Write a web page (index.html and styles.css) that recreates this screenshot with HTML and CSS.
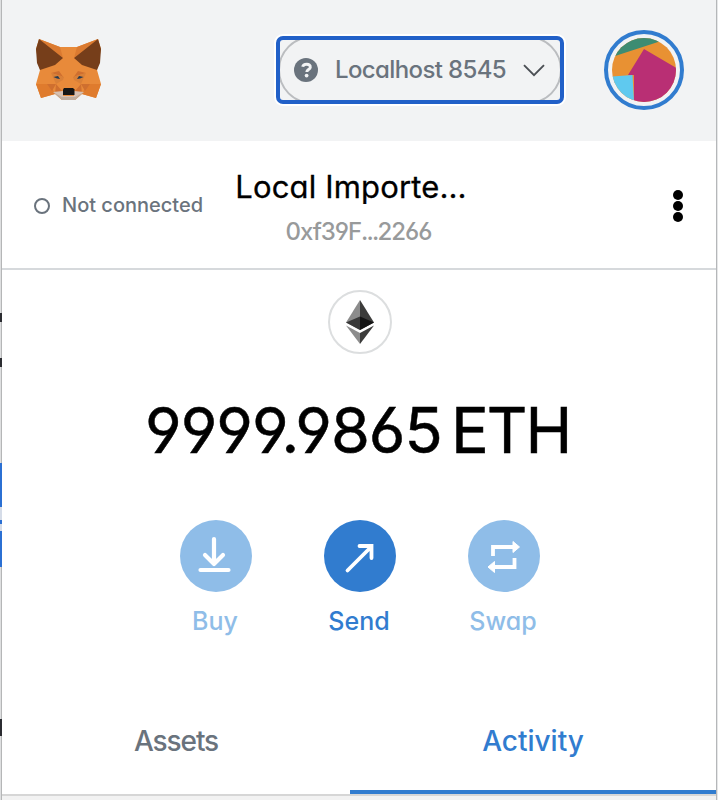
FILE: index.html
```
<!DOCTYPE html>
<html lang="en">
<head>
<meta charset="utf-8">
<title>Wallet</title>
<link rel="stylesheet" href="styles.css">
</head>
<body>
<div class="backdrop"><i class="ink one"></i><i class="ink two"></i><i class="block"></i><i class="ink three"></i></div>
<main class="popup">
  <header class="app-header">
    <svg class="fox" width="68" height="64" viewBox="0 0 68 64">
      <path fill="#e88a3a" d="M3 0 24 8H41L62 0 65 10 61 31 65 45 60 59 46 55 39 61H26L19 55 5 59 0 45 4 31 0 10Z"/>
      <path fill="#db7a30" d="M3 0 24 8 27 19ZM62 0 41 8 38 19Z"/>
      <path fill="#763e1a" d="M3 0 27 19 19 26 4 31 1 24 0 10ZM62 0 38 19 46 26 61 31 64 24 65 10Z"/>
      <path fill="#df7b2d" d="M0 45H14L19 55 5 59ZM65 45H51L46 55 60 59Z"/>
      <path fill="#cf6f2f" d="M23 32 15 34 25 37 28 39ZM42 32 50 34 40 37 37 39ZM11 45H20L16 52ZM54 45H45L49 52ZM20 45 26 52 19 55ZM45 45 39 52 46 55Z"/>
      <path fill="#d98038" d="M15 34 20 45 27 41 28 38ZM50 34 45 45 38 41 37 38Z"/>
      <path fill="#263a50" d="m17.500 38 4.500-1 2 3-3-.500ZM47.500 38 43 37 41 40l3-.500Z"/>
      <path fill="#c0ad9e" d="m17 53 10 4h11l10-4-9 8H26Z"/>
      <path fill="#d7c1b3" d="m17 53 10-1v5h11v-5l10 1-9 5H26Z"/>
      <path fill="#161616" d="M28 49h9l1.500 1.500V56H27v-5.500Z"/>
    </svg>
    <div class="network">
      <span class="network-shape"></span>
      <svg class="help" width="24" height="24" viewBox="0 0 24 24"><circle cx="12" cy="12" r="12" fill="#6a737d"/><path d="M8.7 8.8C9.2 5.7 16.7 5 16.3 9.3c-.2 2.3-3.5 2.3-3.500 4.700" fill="none" stroke="#f2f3f4" stroke-width="2.900"/><circle cx="12.600" cy="17.600" r="1.900" fill="#f2f3f4"/></svg>
      <span class="network-name">Localhost 8545</span>
      <svg class="chevron" width="22" height="13" viewBox="0 0 22 13"><path d="m1 1.200 10 10 10-10" fill="none" stroke="#4b4f54" stroke-width="1.900"/></svg>
    </div>
    <div class="account">
      <svg width="64" height="64" viewBox="0 0 64 64"><defs><clipPath id="disc"><circle cx="32" cy="32" r="32"/></clipPath></defs><g clip-path="url(#disc)"><path fill="#e89133" d="M0 0h64v64H0z"/><path fill="#3d8c72" d="M0 0h54L46 4 0 19z"/><path fill="#b92f74" d="m32 11 36 21v36H22V37h-6z"/><path fill="#5fc9ef" d="M0 38.500 20.500 37 22 64H0z"/></g></svg>
    </div>
  </header>
  <section class="menu-bar">
    <div class="status"><i class="ring"></i><span class="status-text">Not connected</span></div>
    <div class="selected"><div class="account-name">Local Importe...</div><div class="address">0xf39F<span class="ellipsis">...</span>2266</div></div>
    <div class="dots"><i></i><i></i><i></i></div>
  </section>
  <section class="overview">
    <div class="token"><svg width="28" height="44" viewBox="0 0 28 44"><path fill="#8c8c8c" d="M14 0v30L0 22.500z"/><path fill="#3c3c3b" d="m14 0 14 22.500L14 30z"/><path fill="#393939" d="M14 16.500v13.500L0 22.500z"/><path fill="#141414" d="m14 16.500 14 6L14 30z"/><path fill="#8c8c8c" d="M0 25.500 14 33v11z"/><path fill="#3c3c3b" d="M28 25.500 14 33v11z"/></svg></div>
    <div class="balance"><span class="amount">9999.9865</span><span class="unit">ETH</span></div>
    <div class="actions">
      <div class="action muted"><span class="circle"><svg width="72" height="72" viewBox="0 0 72 72"><path d="M34 19v25M25 35l9 9 9-9M20.500 50h28" fill="none" stroke="#fff" stroke-width="4.200" stroke-linecap="round" stroke-linejoin="round"/></svg></span><span class="label buy">Buy</span></div>
      <div class="action"><span class="circle"><svg width="72" height="72" viewBox="0 0 72 72"><path d="M23.500 50.500 47 27M35.500 26H47.500V38" fill="none" stroke="#fff" stroke-width="3.800" stroke-linecap="round" stroke-linejoin="miter"/></svg></span><span class="label send">Send</span></div>
      <div class="action muted"><span class="circle"><svg width="72" height="72" viewBox="0 0 72 72"><path d="M25 36V27H45M46.500 38v9H27" fill="none" stroke="#fff" stroke-width="3.800"/><path fill="#fff" stroke="#fff" stroke-linejoin="round" d="M45 21.500v11l6.500-5.500zM26.500 41.500v11L20 47z"/></svg></span><span class="label swap">Swap</span></div>
    </div>
  </section>
  <nav class="tabs"><div class="tab"><span class="assets">Assets</span></div><div class="tab active"><span class="activity">Activity</span></div></nav>
  <footer class="foot"></footer>
</main>
</body>
</html>
```
FILE: styles.css
```
* { box-sizing: border-box; }
body { margin: 0; width: 718px; height: 800px; overflow: hidden; display: flex; background: #e6e7e8; font-family: Inter, "Liberation Sans", sans-serif; font-feature-settings: "cv11", "cv03", "cv04", "ss03"; white-space: nowrap; }
svg { display: block; flex: none; }
.backdrop { width: 2px; flex: none; background: linear-gradient(90deg, #dedfe0 1px, #b5b6b7 1px); display: flex; flex-direction: column; }
.ink { background: #2b2c31; height: 9px; flex: none; }
.one { margin-top: 313px; }
.two { margin-top: 36px; }
.block { height: 104px; flex: none; margin-top: 96px; background: linear-gradient(#2b70d3 44px, #d5dce8 44px 57px, #2b70d3 57px 61px, #d5dce8 61px 68px, #2b70d3 68px); }
.three { height: 17px; margin-top: 152px; }
.popup { width: 715px; border-right: 1px solid #b5b7b9; background: #fff; display: flex; flex-direction: column; }
.app-header { height: 141px; flex: none; background: #f2f3f4; display: flex; align-items: flex-start; padding: 30px 32px 0; }
.fox { margin: 9px -1px 0 2px; }
.network { position: relative; width: 288px; height: 68px; margin: 6px 0 0 173px; border: 4px solid #2160c8; border-radius: 7px; box-shadow: 0 0 0 2px #fff; display: flex; align-items: center; padding: 0 15px 0 14px; }
.network-shape { position: absolute; inset: 0; overflow: hidden; }
.network-shape::before { content: ""; position: absolute; inset: -4px -2px; border: 2px solid #bbbdc0; border-radius: 34px; }
.network-name { width: 172px; margin: -2px 0 0 17px; font-size: 24px; font-weight: 500; letter-spacing: -0.62px; color: #6a737d; }
.chevron { margin-left: 16px; }
.account { width: 80px; height: 80px; margin-left: 40px; border: 4px solid #317ccf; border-radius: 50%; display: grid; place-items: center; }
.menu-bar { height: 129px; flex: none; border-bottom: 2px solid #d6d9dc; display: flex; align-items: flex-start; }
.status { width: 207px; margin: 53px 0 0 32px; display: flex; align-items: center; height: 24px; }
.ring { width: 16px; height: 16px; border: 2px solid #6a737d; border-radius: 50%; margin-right: 12px; }
.status-text { margin-top: -3px; font-size: 20px; font-weight: 500; letter-spacing: 0; color: #6a737d; }
.selected { width: 240px; margin: 27px 0 0 -10px; text-align: center; }
.account-name { font-size: 31px; line-height: 38px; letter-spacing: 0.15px; -webkit-text-stroke: 0.3px #000; color: #000; }
.address { font-size: 24px; font-weight: 500; line-height: 30px; margin: 11px -15px 0 0; letter-spacing: -1.05px; color: #989a9b; }
.ellipsis { letter-spacing: -1.8px; }
.dots { margin: 49px 0 0 auto; padding-right: 33px; display: flex; flex-direction: column; gap: 1px; }
.dots i { width: 10px; height: 10px; border-radius: 50%; background: #000; }
.overview { height: 418px; flex: none; display: flex; flex-direction: column; align-items: center; padding: 20px 0 0 2px; }
.token { width: 64px; height: 64px; border: 2px solid #dcdedf; border-radius: 50%; display: grid; place-items: center; }
.balance { margin-top: 38px; width: 430px; height: 76px; line-height: 76px; font-size: 63px; -webkit-text-stroke: 0.5px #000; display: flex; color: #000; }
.amount { width: 306px; letter-spacing: -1px; }
.unit { letter-spacing: -2px; }
.actions { display: flex; gap: 72px; margin-top: 52px; }
.action { width: 72px; display: flex; flex-direction: column; align-items: center; color: #317ccf; }
.circle { width: 72px; height: 72px; border-radius: 50%; background: #317ccf; }
.label { font-size: 25px; font-weight: 500; line-height: 30px; margin: 14px 2px 0 0; }
.muted { color: #8fbde8; }
.muted .circle { background: #8fbde8; }
.tabs { height: 108px; flex: none; border-bottom: 2px solid #d6d6d6; display: flex; }
.tab { width: 348px; text-align: center; color: #6a737d; font-size: 28px; font-weight: 500; line-height: 34px; padding-top: 36px; }
.assets { letter-spacing: -1.1px; }
.tab.active { width: 366px; color: #317ccf; border-bottom: 4px solid #317ccf; }
.foot { height: 4px; background: #f2f2f2; }
```
